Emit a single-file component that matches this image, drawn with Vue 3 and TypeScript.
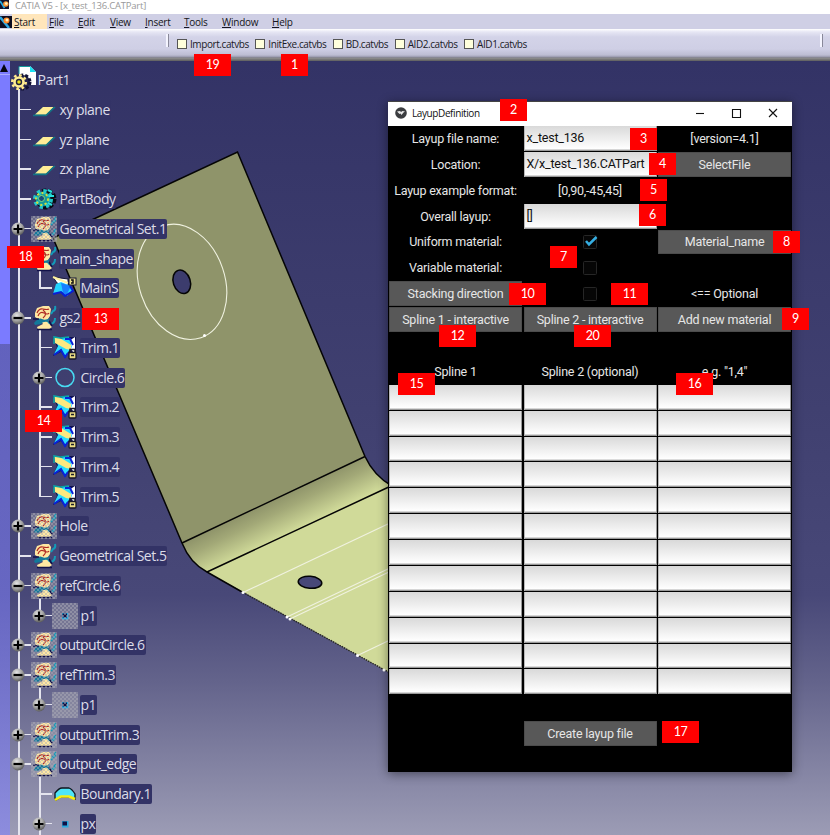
<script setup lang="ts">
type IconName = 'part' | 'plane' | 'body' | 'set' | 'trim' | 'mains' | 'circle' | 'point' | 'boundary'

interface TreeRow {
  label: string
  icon: IconName
  level: 0 | 1 | 2
  knob?: '+' | '-'
  hidden?: boolean
  plain?: boolean
  sub?: 'full' | 'end' | 'start'
}

const rows: TreeRow[] = [
  { label: 'Part1', icon: 'part', level: 0, plain: true },
  { label: 'xy plane', icon: 'plane', level: 1 },
  { label: 'yz plane', icon: 'plane', level: 1 },
  { label: 'zx plane', icon: 'plane', level: 1 },
  { label: 'PartBody', icon: 'body', level: 1 },
  { label: 'Geometrical Set.1', icon: 'set', level: 1, knob: '+', hidden: true },
  { label: 'main_shape', icon: 'set', level: 1, knob: '-', sub: 'start' },
  { label: 'MainS', icon: 'mains', level: 2, sub: 'end' },
  { label: 'gs2', icon: 'set', level: 1, knob: '-', sub: 'start' },
  { label: 'Trim.1', icon: 'trim', level: 2, sub: 'full' },
  { label: 'Circle.6', icon: 'circle', level: 2, knob: '+', sub: 'full' },
  { label: 'Trim.2', icon: 'trim', level: 2, sub: 'full' },
  { label: 'Trim.3', icon: 'trim', level: 2, sub: 'full' },
  { label: 'Trim.4', icon: 'trim', level: 2, sub: 'full' },
  { label: 'Trim.5', icon: 'trim', level: 2, sub: 'end' },
  { label: 'Hole', icon: 'set', level: 1, knob: '+', hidden: true },
  { label: 'Geometrical Set.5', icon: 'set', level: 1 },
  { label: 'refCircle.6', icon: 'set', level: 1, knob: '-', hidden: true, sub: 'start' },
  { label: 'p1', icon: 'point', level: 2, knob: '+', hidden: true, sub: 'end' },
  { label: 'outputCircle.6', icon: 'set', level: 1, knob: '+', hidden: true },
  { label: 'refTrim.3', icon: 'set', level: 1, knob: '-', hidden: true, sub: 'start' },
  { label: 'p1', icon: 'point', level: 2, knob: '+', hidden: true, sub: 'end' },
  { label: 'outputTrim.3', icon: 'set', level: 1, knob: '+', hidden: true },
  { label: 'output_edge', icon: 'set', level: 1, knob: '-', hidden: true, sub: 'start' },
  { label: 'Boundary.1', icon: 'boundary', level: 2, sub: 'full' },
  { label: 'px', icon: 'point', level: 2, knob: '+', sub: 'full' },
]

const menus = ['Start', 'File', 'Edit', 'View', 'Insert', 'Tools', 'Window', 'Help']
const macros = ['Import.catvbs', 'InitExe.catvbs', 'BD.catvbs', 'AID2.catvbs', 'AID1.catvbs']

interface Mark { n: number; x: number; y: number }
const marks: Mark[] = [
  { n: 19, x: 194, y: 54 }, { n: 1, x: 281, y: 54 }, { n: 2, x: 500, y: 99 },
  { n: 3, x: 630, y: 128 }, { n: 4, x: 649, y: 153 }, { n: 5, x: 640, y: 179 },
  { n: 6, x: 639, y: 204 }, { n: 7, x: 550, y: 246 }, { n: 8, x: 773, y: 231 },
  { n: 9, x: 782, y: 308 }, { n: 10, x: 509, y: 283 }, { n: 11, x: 611, y: 283 },
  { n: 12, x: 439, y: 325 }, { n: 20, x: 574, y: 325 }, { n: 15, x: 398, y: 373 },
  { n: 16, x: 676, y: 373 }, { n: 17, x: 662, y: 721 }, { n: 18, x: 7, y: 246 },
  { n: 13, x: 82, y: 308 }, { n: 14, x: 25, y: 410 },
]

type Cell = { kind: 'label' | 'button' | 'field' | 'check' | 'blank'; text?: string; on?: boolean }
const l = (text: string): Cell => ({ kind: 'label', text })
const b = (text: string): Cell => ({ kind: 'button', text })
const f = (text = ''): Cell => ({ kind: 'field', text })
const c = (on: boolean): Cell => ({ kind: 'check', on })
const blank: Cell = { kind: 'blank' }

const cells: Cell[] = [
  l('Layup file name:'), f('x_test_136'), l('[version=4.1]'),
  l('Location:'), f('X/x_test_136.CATPart'), b('SelectFile'),
  l('Layup example format:'), l('[0,90,-45,45]'), blank,
  l('Overall layup:'), f('[]'), blank,
  l('Uniform material:'), c(true), b('Material_name'),
  l('Variable material:'), c(false), blank,
  b('Stacking direction'), c(false), l('<== Optional'),
  b('Spline 1 - interactive'), b('Spline 2 - interactive'), b('Add new material'),
  blank, blank, blank,
  l('Spline 1'), l('Spline 2 (optional)'), l('e.g. "1,4"'),
  ...Array.from({ length: 36 }, () => f()),
  blank, blank, blank,
  blank, b('Create layup file'), blank,
  blank, blank, blank,
]
</script>

<template>
  <div class="app">
    <svg class="defs" width="0" height="0">
      <defs>
        <radialGradient id="ball" cx=".4" cy=".3" r=".7">
          <stop offset="0" stop-color="#e4e4e4" /><stop offset=".6" stop-color="#a0a0a0" /><stop offset="1" stop-color="#5c5c5c" />
        </radialGradient>
        <g id="ic-part">
          <path d="M8 0H19L25 6V19H8Z" fill="#fff" /><path d="M8 8V.5H19" fill="none" stroke="#169a9d" />
          <path d="M19 0L25 6H19Z" fill="#18e0f0" />
          <circle cx="12" cy="16" r="7" fill="#26264e" stroke="#111135" stroke-width="3" stroke-dasharray="3 2" />
          <circle cx="8" cy="16" r="5.8" fill="#ffee94" /><circle cx="8" cy="16" r="6.7" fill="none" stroke="#ffe98b" stroke-width="2.6" stroke-dasharray="2.6 2.65" />
          <circle cx="8" cy="16" r="2.5" fill="#e8df20" stroke="#22223d" stroke-width="1.4" />
        </g>
        <g id="ic-plane">
          <path d="M12 10H24L15 19H2" fill="#147078" /><path d="M12 10H22.500L15 17.500H4Z" fill="#ffec96" />
          <path d="M2 18.500H15L24 10" fill="none" stroke="#127486" stroke-width="1.500" />
        </g>
        <g id="ic-body">
          <circle cx="15" cy="13" r="8.500" fill="#10151f" stroke="#080b14" stroke-width="4" stroke-dasharray="4 2" />
          <circle cx="12" cy="13" r="7.500" fill="#159799" stroke="#20c7ca" stroke-width="5" stroke-dasharray="3 2.900" />
          <circle cx="11" cy="13" r="6" fill="none" stroke="#d3da39" stroke-width="2" stroke-dasharray="2 2.500" />
          <circle cx="10.500" cy="12.500" r="3" fill="#174c7a" stroke="#7adf82" />
          <path d="M17 4L21 6M18 10H23M17 17L21 19" stroke="#28e0df" stroke-width="2" />
        </g>
        <g id="ic-set">
          <path d="M4 8L6 3L12 1H18L20 4L19 11L17 14L18 18L21 22L17 25H7L6 22L12 19L9 15L4 12Z" fill="#ffe8a2" />
          <path d="M6 8Q8 3 12 4T18 4M7 11Q9 6 13 8T18 8M12 5Q17 9 12 13" fill="none" stroke="#b02b24" stroke-width="1.200" />
          <path d="M3 18Q8 12 11 14T19 13L17 17Q12 16 10 19L4 20Z" fill="#13799a" />
          <path d="M24 1Q25 5 22 6L20 9M24 13Q24 18 20 19L17 17" fill="none" stroke="#139bb9" stroke-width="2" />
          <path d="M2 14H8M6 24.500H21M18 16L21 21" fill="none" stroke="#11114a" stroke-width="1.700" />
        </g>
        <g id="ic-trim">
          <path d="M1 2H24V20L17 17L13 23L9 17L1 21L5 12Z" fill="#101050" />
          <path d="M23 2V20L19 14L17 6Z" fill="#fff" />
          <path d="M2 2L7 4L17 2L20 12L13 21L9 15L2 19L6 11Z" fill="#29dcff" />
          <path d="M2 2L6 2L19 10V15L14 14L3 8Z" fill="#ffe980" />
          <path d="M2 9V2L8 3L17 2" fill="none" stroke="#0ba6a7" stroke-width="1.500" />
          <path d="M2 20L9 15L13 22L16 18M13 4H18L21 10" fill="none" stroke="#0824d8" stroke-width="2" />
          <rect x="17" y="17.500" width="7" height="6.500" rx="1" fill="#eadc84" stroke="#17172a" stroke-width="1.300" /><path d="M18 17V14.500H23V17M19 20.500H22" fill="none" stroke="#1b1b28" stroke-width="1.500" />
        </g>
        <g id="ic-mains">
          <path d="M1 2L16 4V13L5 8Z" fill="#fff" stroke="#181832" />
          <path d="M4 9L9 7L19 11L20 16L15 21L10 17L1 19Z" fill="#23d4ff" /><path d="M9 8L19 11L14 21L11 18Z" fill="#1780ff" />
          <path d="M1 19L9 17L13 21L21 16L18 11" fill="none" stroke="#0820d5" stroke-width="2" />
          <path d="M1 2L16 8" stroke="#fff2a0" stroke-width="2" /><rect x="17" y="3" width="7" height="7" fill="#e7dc88" stroke="#191936" /><path d="M19 5H21V8H19" fill="none" stroke="#111" stroke-width="1.500" />
        </g>
        <g id="ic-circle"><circle cx="13" cy="12.500" r="9" fill="none" stroke="#48dcf3" stroke-width="1.500" /></g>
        <g id="ic-point"><path d="M10 10H16.500V16.500H10Z" fill="#2ba8dc" /><path d="M10.500 10.500H15V14.500H10.500Z" fill="#101044" /></g>
        <g id="ic-boundary">
          <path d="M3 17V12Q7 7 10 7H17Q20 8 23 13V18L17 16H9L4 19Z" fill="#4ee5f7" stroke="#10151e" stroke-width="1.300" />
          <path d="M3 19L9 15.500H17L23 18" fill="none" stroke="#f7ed12" stroke-width="2.600" />
        </g>
      </defs>
    </svg>

    <header class="titlebar">
      <svg class="logo" viewBox="0 0 10 10"><rect width="10" height="10" fill="#10122e" /><path d="M0 1L5 9" stroke="#27a8e0" stroke-width="2" /><circle cx="6.500" cy="4.500" r="3" fill="#ff9b38" /><circle cx="7" cy="4" r="1.500" fill="#fff2c0" /></svg>
      <span>CATIA V5 - [x_test_136.CATPart]</span>
    </header>
    <nav class="menubar">
      <svg class="logo" viewBox="0 0 12 12"><rect width="12" height="12" fill="#0c0e20" /><path d="M0 1L9 12" stroke="#2aa9e6" stroke-width="2.500" /><circle cx="6.500" cy="4.500" r="3" fill="#ff8a28" /><circle cx="7" cy="4" r="1.500" fill="#fff0c0" /></svg>
      <span v-for="m in menus" :key="m" class="menu"><u>{{ m[0] }}</u>{{ m.slice(1) }}</span>
    </nav>
    <div class="toolbar">
      <i class="grip"></i>
      <span v-for="m in macros" :key="m" class="macro"><i class="box"></i><span>{{ m }}</span></span>
      <i class="grip end"></i>
    </div>

    <main class="view">
      <svg class="scene" viewBox="0 61 830 774" width="830" height="774">
        <defs>
          <linearGradient id="bend" gradientUnits="userSpaceOnUse" x1="273" y1="500" x2="289" y2="533">
            <stop offset="0" stop-color="#8f946a" /><stop offset=".35" stop-color="#a2a877" /><stop offset="1" stop-color="#d0da99" />
          </linearGradient>
        </defs>
        <path d="M53 238L237.500 152L365 456.500L182 543Z" fill="#8f946a" />
        <path d="M182 543L365 456.500Q374 476 392 486L207 572Q190 563 182 543Z" fill="url(#bend)" />
        <path d="M207 572L392 485.500V674Z" fill="#d0da99" />
        <g fill="none" stroke="#050505" stroke-width="1.500">
          <path d="M53 238L237.500 152L365 456.500Q374 476 392 486" />
          <path d="M53 238L182 543Q190 563 207 572L243 592.500" />
          <path d="M182 543L365 456.500M207 572L392 485.500" />
        </g>
        <path d="M243 592.500L392 674" fill="none" stroke="#282822" stroke-width="1.400" stroke-dasharray="1.500 1" />
        <g fill="none" stroke="#f0f2e0" stroke-width="1.100">
          <path d="M243 592.500L390 523M287 617L390 568M290 619L390 571.500M357.500 655.500L390 640" />
          <ellipse cx="182" cy="281.800" rx="42.800" ry="59" transform="rotate(-18.700 182 281.800)" />
        </g>
        <g fill="#fff"><circle cx="243" cy="592.500" r="1.500" /><circle cx="287" cy="617" r="1.500" /><circle cx="290" cy="619" r="1.500" /><circle cx="357.500" cy="655.500" r="1.500" /><circle cx="384" cy="670" r="1.500" /><circle cx="204.500" cy="335.500" r="1.500" /></g>
        <g stroke="#050505" stroke-width="1.500">
          <ellipse cx="181.800" cy="281.800" rx="8.500" ry="12" transform="rotate(-18 181.800 281.800)" fill="#3c3c6d" />
          <ellipse cx="310" cy="582.300" rx="11.800" ry="6" transform="rotate(5 310 582.300)" fill="#484878" />
        </g>
      </svg>

      <aside class="scroll"><div class="up"><svg viewBox="0 0 8 8" width="8" height="8"><path d="M4 0L8 8H0Z" fill="#050510" /></svg></div></aside>

      <section class="tree">
        <div v-for="(r, i) in rows" :key="i" class="row" :class="['lv' + r.level, r.sub ? 'sub-' + r.sub : '']">
          <span class="gutter">
            <svg v-if="r.knob" class="knob" viewBox="0 0 14 14">
              <circle cx="7" cy="7" r="6.500" fill="url(#ball)" />
              <path :d="r.knob === '+' ? 'M2.500 7H11.500M7 2.500V11.500' : 'M2.500 7H11.500'" stroke="#000" stroke-width="2.200" />
            </svg>
          </span>
          <span class="icon" :class="{ hidden: r.hidden }">
            <svg viewBox="0 0 26 26" width="26" height="26"><use :href="'#ic-' + r.icon" /></svg>
          </span>
          <span class="tag" :class="{ plain: r.plain }">{{ r.label }}</span>
        </div>
      </section>
    </main>

    <section class="dialog">
      <header class="dlg-title">
        <svg viewBox="0 0 12 12" width="12" height="12"><circle cx="6" cy="6" r="5.800" fill="#3b3d40" /><path d="M2 4.500L5 4L6 5L7.500 4L10 4.500L8.500 5.500L6.500 8L5.500 6.500L4.500 7Z" fill="#e8e8e8" /></svg>
        <span class="name">LayupDefinition</span>
        <svg class="ctl" viewBox="0 0 84 12" width="84" height="12" fill="none" stroke="#111" stroke-width="1.100">
          <path d="M1 6.500H9" /><path d="M37.500 2.500H45.500V10.500H37.500Z" /><path d="M74 2L82 10M82 2L74 10" />
        </svg>
      </header>
      <div class="form">
        <div v-for="(cell, i) in cells" :key="i" class="cell" :class="cell.kind">
          <svg v-if="cell.kind === 'check'" viewBox="0 0 18 18" width="18" height="18">
            <rect x="2.500" y="2.500" width="13" height="13" rx="1" fill="#060606" stroke="#262626" />
            <path v-if="cell.on" d="M5 8L8 11.500L15.500 4" fill="none" stroke="#35aee2" stroke-width="2.500" />
          </svg>
          <span v-else>{{ cell.text }}</span>
        </div>
      </div>
    </section>

    <span v-for="m in marks" :key="m.n" class="mark" :class="{ wide: m.n > 9 }" :style="{ left: m.x + 'px', top: m.y + 'px' }">{{ m.n }}</span>
  </div>
</template>

<style>
body { background: #333366; overflow: hidden; }
</style>

<style scoped>
.app { position: relative; width: 830px; height: 835px; overflow: hidden; display: flex; flex-direction: column; font-family: "Open Sans", "Noto Sans", sans-serif; }
.defs { position: absolute; }
.titlebar { height: 14px; background: #fff; display: flex; align-items: flex-start; color: #999; font-size: 9.500px; line-height: 13px; letter-spacing: -.22px; }
.titlebar span { margin-top: -1px; }
.titlebar .logo { width: 9px; height: 9px; margin: 0 6px 0 0; }
.menubar { height: 15px; background: #cfcfe5; display: grid; grid-template-columns: 12px 35px 29px 32px 35px 39px 38px 50px 40px; font-size: 10px; line-height: 16px; color: #151520; letter-spacing: -.25px; }
.menubar .logo { width: 12px; height: 12px; margin-top: 2px; }
.menu { padding-left: 2px; }
.menu:nth-of-type(1) { background: #ffe6bb; }
.toolbar { height: 32px; box-sizing: border-box; padding: 0 7px 1px 166px; border-bottom: 1px solid #666; background: linear-gradient(#fff 0, #e6e6f4 3px, #d3d3e8 8px, #cfcfe5 20px, #bdbdd2 26px, #9898ac 28px, #777 29px, #999 30px, #555 31px); display: flex; align-items: center; font-size: 10px; color: #1a1a26; letter-spacing: -.42px; }
.grip { width: 2px; height: 13px; margin: -7px 8px 0 0; border-right: 1px solid #888899; background: #f4f4ff; }
.grip.end { margin: -7px 0 0 auto; }
.macro { display: flex; align-items: center; gap: 3px; margin-right: 6.500px; }
.box { width: 8px; height: 8px; border: 1px solid #555; background: #ffffdc; }
.view { position: relative; z-index: 0; height: 774px; display: flex; background: linear-gradient(#333366 0%, #404070 45%, #484878 69%, #63638b 80%, #9c9cb5 100%); }
.scene { position: absolute; left: 0; top: 0; }
.scroll { position: relative; width: 10px; background: linear-gradient(#7b7bff 0 283px, rgba(128, 128, 255, .55) 283px); }
.up { height: 13px; display: flex; align-items: center; border-bottom: 1px solid #aaf; }
.tree { position: relative; width: 300px; padding-top: 4.200px; display: flex; flex-direction: column; }
.row { position: relative; flex: none; height: 29.76px; display: flex; align-items: center; }
.gutter { position: relative; width: 21px; height: 100%; flex: none; display: flex; align-items: center; }
.lv0 .gutter { width: 0; }
.lv0 .icon { margin: 0 1px; top: -1px; }
.lv2 .gutter { width: 42px; }
.row::before { content: ""; position: absolute; left: 8px; top: 0; bottom: 0; width: 1.500px; background: #e4e4ee; }
.lv0::before { top: 24px; }
.row[class*="sub-"]::after { content: ""; position: absolute; left: 29px; top: 0; bottom: 0; width: 1.500px; background: #e4e4ee; }
.row.sub-start::after { top: 24px; }
.row.sub-end::after { bottom: 14px; }
.gutter::before { content: ""; position: absolute; left: 9px; right: 0; top: 14px; height: 1.500px; background: #e4e4ee; }
.lv2 .gutter::before { left: 30px; }
.lv0 .gutter::before { display: none; }
.knob { position: relative; z-index: 1; width: 14px; height: 14px; margin-left: 1px; }
.lv2 .knob { margin-left: 22px; }
.icon { position: relative; z-index: 1; width: 26px; height: 26px; flex: none; }
.icon svg { display: block; position: relative; }
.icon.hidden { background: rgba(164, 164, 176, .45); }
.icon.hidden::after { content: ""; position: absolute; inset: 0; background: repeating-conic-gradient(rgba(170, 170, 182, .5) 0 25%, transparent 0 50%) 0 0 / 4px 4px; }
.tag { margin-left: 2px; height: 20px; line-height: 20px; padding: 0 1px 0 .500px; border-radius: 2px; background: #333366; color: #dcdce8; font-size: 14px; letter-spacing: -.5px; white-space: nowrap; }
.tag.plain { background: none; margin-left: -1px; }
.dialog { position: absolute; left: 388px; top: 101px; width: 404px; height: 671px; background: #000; box-shadow: 0 2px 10px rgba(0, 0, 0, .45); display: flex; flex-direction: column; }
.dlg-title { height: 25px; flex: none; background: #fff; display: flex; align-items: center; padding: 0 13px 2px 7px; border-top: 1px solid #444; box-sizing: border-box; }
.name { margin-left: 5px; font-size: 10px; letter-spacing: -.4px; color: #111; }
.ctl { margin-left: auto; }
.form { flex: 1; min-height: 0; display: grid; grid-template-columns: repeat(3, 1fr); grid-template-rows: repeat(25, minmax(0, 1fr)); gap: 1px 1.500px; padding: 0 1px; font-family: Roboto, sans-serif; font-size: 12.500px; letter-spacing: -.22px; color: #e6e6e6; }
.cell { display: flex; align-items: center; justify-content: center; white-space: nowrap; min-height: 0; }
.button { background: #585858; box-shadow: inset 0 0 0 1px #4c4c4c; border-radius: 1px; }
.field { justify-content: flex-start; padding: 0 0 1px 3px; color: #111; background: linear-gradient(#d9d9d9, #fff 92%, #999 97%); box-shadow: inset 1px 0 #b8b8b8, inset -1px 0 #999; }
.mark { position: absolute; z-index: 2; width: 27px; height: 22px; line-height: 21px; background: #ff0000; color: #fff; font-family: Lato, sans-serif; font-size: 12.500px; letter-spacing: -.4px; text-align: center; }
.mark.wide { width: 37px; }
</style>
